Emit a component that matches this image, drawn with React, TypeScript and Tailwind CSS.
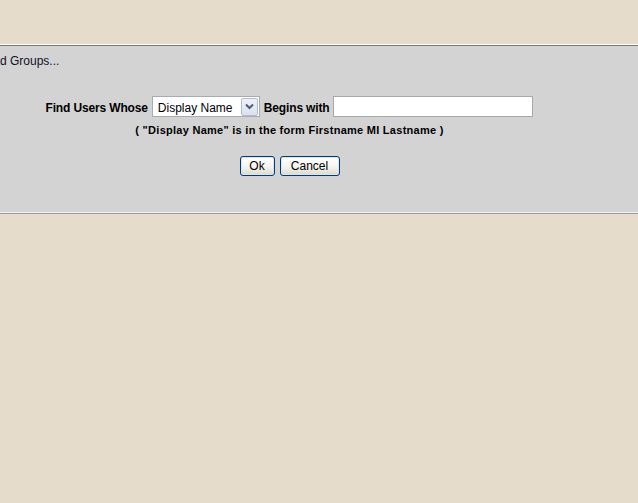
import React from "react";

const Chevron: React.FC = () => (
  <svg width="9" height="7" viewBox="0 0 9 7" className="block">
    <path d="M1 1.5 L4.5 5 L8 1.5" fill="none" stroke="#4d5c7a" strokeWidth="2" />
  </svg>
);

const XpButton: React.FC<{ label: string; width: string }> = ({ label, width }) => (
  <button
    type="button"
    className={`${width} h-[20px] rounded-[3px] border border-[#003c74] bg-[linear-gradient(to_bottom,#ffffff,#f4f4f0_55%,#dcd8cc)] text-[12px] leading-[14px] text-black shadow-[inset_0_0_0_1px_#d8e4f8]`}
  >
    {label}
  </button>
);

export default function App() {
  return (
    <div className="min-h-screen bg-[#e5dccb] font-['Liberation_Sans',Arial,sans-serif]">
      <div className="h-[44px]" />
      <div className="h-px bg-white" />
      <div className="h-px bg-[#777777]" />

      {/* Search panel */}
      <div className="h-[166px] bg-[#d3d3d3] pt-[8px]">
        <div className="text-[12px] leading-[14px] text-[#10102a]">d Groups...</div>

        <div className="w-[579px] mt-[28px] flex flex-col items-center">
          <div className="flex items-center gap-[4px] h-[21px]">
            <span className="pt-[2px] text-[12px] font-bold tracking-[-0.15px] text-black">Find Users Whose</span>
            <div className="w-[108px] h-[21px] flex items-center justify-between border border-[#a5acb5] bg-white pl-[5px] pr-[1px]">
              <span className="pt-[2px] text-[12px] text-black">Display Name</span>
              <div className="w-[17px] h-[18px] flex items-center justify-center rounded-[2px] border border-[#b4bccb] bg-[linear-gradient(to_bottom,#eef1f7,#dbe1ed)]">
                <Chevron />
              </div>
            </div>
            <span className="pt-[2px] text-[12px] font-bold tracking-[-0.15px] text-black">Begins with</span>
            <div className="w-[200px] h-[21px] border border-[#a5a9ae] bg-white" />
          </div>

          <div className="mt-[7px] text-[11px] leading-[13px] font-bold tracking-[0.27px] text-black">
            ( "Display Name" is in the form Firstname MI Lastname )
          </div>

          <div className="mt-[19px] flex gap-[5px]">
            <XpButton label="Ok" width="w-[35px]" />
            <XpButton label="Cancel" width="w-[60px]" />
          </div>
        </div>
      </div>

      <div className="h-px bg-[#f2f2f2]" />
      <div className="h-px bg-[#9a9a9a]" />
    </div>
  );
}
